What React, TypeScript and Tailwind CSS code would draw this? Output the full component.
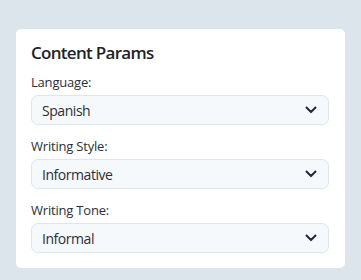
import React from "react";

function Chevron() {
  return (
    <svg width="12" height="8" viewBox="0 0 12 8" fill="none" className="shrink-0">
      <path d="M1.5 1.5L6 6L10.5 1.5" stroke="#1f2937" strokeWidth="2" strokeLinecap="round" strokeLinejoin="round" />
    </svg>
  );
}

function Field({ label, value }: { label: string; value: string }) {
  return (
    <div className="flex flex-col gap-1">
      <div className="text-[13px] leading-[18px] tracking-[-0.2px] text-[#2b2f36]">{label}</div>
      <div className="h-[30px] flex items-center justify-between rounded-[7px] border border-[#dde5ee] bg-[#f6f9fc] pl-[10px] pr-[11px]">
        <span className="text-[14px] tracking-[-0.45px] text-[#2b2f36]">{value}</span>
        <Chevron />
      </div>
    </div>
  );
}

export default function App() {
  return (
    <div className="min-h-[280px] bg-[#dce4ec] pt-[29px] px-4" style={{ fontFamily: '"Open Sans", "Noto Sans", sans-serif' }}>
      <div className="rounded-[5px] bg-white pl-[15px] pr-[16px] pt-[12px] pb-[15px] flex flex-col">
        <div className="text-[17px] leading-[24px] font-semibold tracking-[-0.7px] text-[#1f2328] mb-2">Content Params</div>
        <div className="flex flex-col gap-3">
          <Field label="Language:" value="Spanish" />
          <Field label="Writing Style:" value="Informative" />
          <Field label="Writing Tone:" value="Informal" />
        </div>
      </div>
    </div>
  );
}
